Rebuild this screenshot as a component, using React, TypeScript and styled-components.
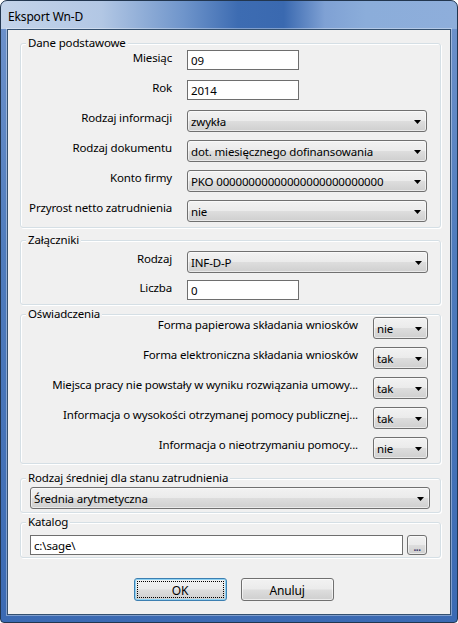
import styled, { createGlobalStyle } from "styled-components"

const GlobalStyle = createGlobalStyle`
  html, body { margin: 0; padding: 0; background: #fff; }
  body {
    font-family: "Noto Sans", "Open Sans", "DejaVu Sans", sans-serif;
    font-size: 11.5px;
    letter-spacing: -0.15px;
    color: #000;
  }
  * { box-sizing: border-box; }
`

const Window = styled.div`
  width: 458px;
  height: 623px;
  display: flex;
  flex-direction: column;
  border: 1px solid #22364f;
  border-radius: 7px 7px 4px 4px;
  overflow: hidden;
  background:
    linear-gradient(90deg, #c4d4ea 0%, #b2c7e4 22%, #6f95cb 40%, #3d6cb2 52%, #3a69b0 62%, #7fa1d4 71%, #8badda 80%, #8eaedb 100%) top / 100% 28px no-repeat,
    linear-gradient(180deg, #6f93cc 0%, #4f7cbd 40%, #3b6ab3 100%);
`

const TitleBar = styled.div`
  height: 28px;
  flex: none;
  display: flex;
  align-items: center;
  padding: 2px 0 0 7px;
  font-size: 12px;
  color: #000;
`

const Client = styled.div`
  flex: 1;
  margin: 0 6px 7px;
  border: 1px solid #34506f;
  background: #f0f0f0;
  box-shadow: 0 0 0 1px rgba(255, 255, 255, 0.35);
  padding: 0 9px 0 12px;
  display: flex;
  flex-direction: column;
`

const Group = styled.div<{ $mt: number; $pad: string }>`
  position: relative;
  margin-top: ${p => p.$mt}px;
  border: 1px solid #d5dfe5;
  border-radius: 3px;
  box-shadow: inset 1px 1px 0 #fff, 1px 1px 0 #fff;
  padding: ${p => p.$pad};
`

const Legend = styled.span`
  position: absolute;
  top: -8px;
  left: 5px;
  padding: 0 2px;
  background: #f0f0f0;
  line-height: 14px;
  white-space: nowrap;
`

const FormGrid = styled.div<{ $cols: string; $gap: number }>`
  display: grid;
  grid-template-columns: ${p => p.$cols};
  column-gap: 15px;
  row-gap: ${p => p.$gap}px;
  grid-auto-rows: 22px;
`

const Label = styled.div`
  text-align: right;
  line-height: 15px;
  white-space: nowrap;
`

const TextBox = styled.input<{ $w?: number }>`
  width: ${p => (p.$w ? `${p.$w}px` : "100%")};
  height: 20px;
  margin: 0;
  border: 1px solid #6e6e6e;
  background: #fff;
  padding: 0 3px;
  font: inherit;
  letter-spacing: inherit;
  color: #000;
  outline: none;
`

const ComboBox = styled.div`
  height: 22px;
  display: flex;
  align-items: center;
  justify-content: space-between;
  border: 1px solid #707070;
  border-radius: 3px;
  background: linear-gradient(180deg, #f2f2f2 0%, #ebebeb 48%, #dddddd 52%, #cfcfcf 100%);
  box-shadow: inset 0 0 0 1px rgba(255, 255, 255, 0.55);
  padding: 1px 5px 0 3px;
  white-space: nowrap;
  overflow: hidden;
`

const PathRow = styled.div`
  display: flex;
  gap: 4px;
`

const SmallButton = styled.div`
  width: 20px;
  height: 20px;
  flex: none;
  border: 1px solid #707070;
  border-radius: 3px;
  background: linear-gradient(180deg, #f2f2f2 0%, #ebebeb 48%, #dddddd 52%, #cfcfcf 100%);
  box-shadow: inset 0 0 0 1px rgba(255, 255, 255, 0.55);
  display: flex;
  align-items: flex-end;
  justify-content: center;
  font-size: 10px;
  line-height: 13px;
  letter-spacing: -0.5px;
  color: #3a3a6a;
  font-weight: bold;
`

const Footer = styled.div`
  display: flex;
  justify-content: center;
  gap: 14px;
  margin-top: 20px;
  padding-left: 6px;
`

const Button = styled.div<{ $default?: boolean }>`
  position: relative;
  width: 93px;
  height: 23px;
  border: 1px solid ${p => (p.$default ? "#3c7fb1" : "#707070")};
  border-radius: 3px;
  background: linear-gradient(180deg, #f2f2f2 0%, #ebebeb 48%, #dddddd 52%, #cfcfcf 100%);
  box-shadow: inset 0 0 0 1px ${p => (p.$default ? "#8fd2f3" : "rgba(255,255,255,0.6)")};
  display: flex;
  align-items: center;
  justify-content: center;
  padding-top: 1px;
  font-size: 12px;
  &::after {
    content: "";
    display: ${p => (p.$default ? "block" : "none")};
    position: absolute;
    inset: 2px;
    border: 1px dotted #000;
  }
`

const Arrow = () => (
  <svg width="7" height="4" viewBox="0 0 7 4" style={{ flex: "none" }}>
    <path d="M0 0h7L3.5 4z" fill="#000" />
  </svg>
)

const Combo = ({ value }: { value: string }) => (
  <ComboBox>
    <span>{value}</span>
    <Arrow />
  </ComboBox>
)

const statements = [
  ["Forma papierowa składania wniosków", "nie"],
  ["Forma elektroniczna składania wniosków", "tak"],
  ["Miejsca pracy nie powstały w wyniku rozwiązania umowy...", "tak"],
  ["Informacja o wysokości otrzymanej pomocy publicznej...", "tak"],
  ["Informacja o nieotrzymaniu pomocy...", "nie"],
]

export default function App() {
  return (
    <>
      <GlobalStyle />
      <Window>
        <TitleBar>Eksport Wn-D</TitleBar>
        <Client>
          <Group $mt={13} $pad="6px 0 5px 0">
            <Legend>Dane podstawowe</Legend>
            <FormGrid $cols="151px 240px" $gap={8}>
              <Label>Miesiąc</Label>
              <div><TextBox $w={112} readOnly value="09" /></div>
              <Label>Rok</Label>
              <div><TextBox $w={112} readOnly value="2014" /></div>
              <Label>Rodzaj informacji</Label>
              <Combo value="zwykła" />
              <Label>Rodzaj dokumentu</Label>
              <Combo value="dot. miesięcznego dofinansowania" />
              <Label>Konto firmy</Label>
              <Combo value="PKO 00000000000000000000000000" />
              <Label>Przyrost netto zatrudnienia</Label>
              <Combo value="nie" />
            </FormGrid>
          </Group>

          <Group $mt={12} $pad="10px 0 2px 0">
            <Legend>Załączniki</Legend>
            <FormGrid $cols="151px 241px" $gap={7}>
              <Label>Rodzaj</Label>
              <Combo value="INF-D-P" />
              <Label>Liczba</Label>
              <div><TextBox $w={112} readOnly value="0" /></div>
            </FormGrid>
          </Group>

          <Group $mt={9} $pad="2px 12px 4px 0">
            <Legend>Oświadczenia</Legend>
            <FormGrid $cols="1fr 55px" $gap={8}>
              {statements.map(([label, value]) => (
                <>
                  <Label key={label}>{label}</Label>
                  <Combo key={label + "-v"} value={value} />
                </>
              ))}
            </FormGrid>
          </Group>

          <Group $mt={14} $pad="8px 10px 3px 9px">
            <Legend>Rodzaj średniej dla stanu zatrudnienia</Legend>
            <Combo value="Średnia arytmetyczna" />
          </Group>

          <Group $mt={9} $pad="12px 13px 2px 9px">
            <Legend>Katalog</Legend>
            <PathRow>
              <TextBox readOnly value="c:\sage\" />
              <SmallButton>...</SmallButton>
            </PathRow>
          </Group>

          <Footer>
            <Button $default>OK</Button>
            <Button>Anuluj</Button>
          </Footer>
        </Client>
      </Window>
    </>
  )
}
